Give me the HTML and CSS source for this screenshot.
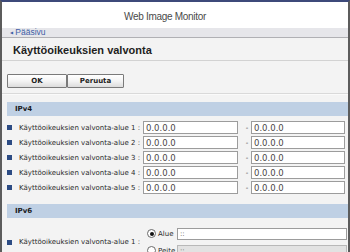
FILE: index.html
```html
<!DOCTYPE html>
<html lang="fi">
<head>
<meta charset="utf-8">
<title>Web Image Monitor</title>
<link rel="stylesheet" href="styles.css">
</head>
<body>
<div class="frame">
  <header class="top"><span class="brand">Web Image Monitor</span></header>
  <nav class="crumb"><a class="crumb-link" href="#"><span class="crumb-arrow">&#9664;</span> Pääsivu</a></nav>
  <main class="main">
    <h1 class="title">Käyttöoikeuksien valvonta</h1>
    <div class="actions">
      <button class="btn btn-ok" type="button">OK</button><button class="btn btn-cancel" type="button">Peruuta</button>
    </div>
    <div class="sep"></div>

    <section class="group">
      <h2 class="band">IPv4</h2>
      <div class="rows">
        <div class="row"><span class="label"><i class="bullet"></i>Käyttöoikeuksien valvonta-alue 1 :</span><input class="field f-from" value="0.0.0.0"><span class="dash">-</span><input class="field f-to" value="0.0.0.0"></div>
        <div class="row"><span class="label"><i class="bullet"></i>Käyttöoikeuksien valvonta-alue 2 :</span><input class="field f-from" value="0.0.0.0"><span class="dash">-</span><input class="field f-to" value="0.0.0.0"></div>
        <div class="row"><span class="label"><i class="bullet"></i>Käyttöoikeuksien valvonta-alue 3 :</span><input class="field f-from" value="0.0.0.0"><span class="dash">-</span><input class="field f-to" value="0.0.0.0"></div>
        <div class="row"><span class="label"><i class="bullet"></i>Käyttöoikeuksien valvonta-alue 4 :</span><input class="field f-from" value="0.0.0.0"><span class="dash">-</span><input class="field f-to" value="0.0.0.0"></div>
        <div class="row"><span class="label"><i class="bullet"></i>Käyttöoikeuksien valvonta-alue 5 :</span><input class="field f-from" value="0.0.0.0"><span class="dash">-</span><input class="field f-to" value="0.0.0.0"></div>
      </div>
    </section>

    <section class="group group-v6">
      <h2 class="band">IPv6</h2>
      <div class="row6">
        <span class="label"><i class="bullet"></i>Käyttöoikeuksien valvonta-alue 1 :</span>
        <div class="opts">
          <div class="opt"><span class="radio radio-on"></span><span class="opt-text">Alue</span><input class="field f-wide" value="::"></div>
          <div class="opt"><span class="radio"></span><span class="opt-text">Peite</span><input class="field f-wide f-off" value="::"></div>
        </div>
      </div>
    </section>
  </main>
</div>
</body>
</html>
```

FILE: styles.css
```css
html, body {
  margin: 0;
  padding: 0;
}
body {
  width: 350px;
  height: 252px;
  overflow: hidden;
  background: #f3f3f3;
  font-family: "DejaVu Sans", Verdana, sans-serif;
}
.frame {
  box-sizing: border-box;
  width: 350px;
  min-height: 300px;
  border-top: 2px solid #3d4a7a;
  border-left: 2px solid #5c5c5c;
  border-right: 2px solid #5c5c5c;
  background: #f3f3f3;
}
.top {
  height: 26px;
  background: #fff;
  display: flex;
  align-items: center;
  padding-left: 122px;
}
.brand {
  font-family: "Liberation Sans", Arial, sans-serif;
  font-size: 10px;
  letter-spacing: -0.3px;
  color: #4a4a4a;
  padding-top: 2px;
}
.crumb {
  height: 9px;
  background: #e6e6ea;
  border-bottom: 1px solid #b0b0b4;
  padding-left: 8px;
  display: flex;
  align-items: center;
}
.crumb-link {
  font-family: "Liberation Sans", Arial, sans-serif;
  font-size: 8.5px;
  color: #3e5ea6;
  text-decoration: none;
  line-height: 9px;
}
.crumb-arrow {
  font-size: 4px;
  vertical-align: 1px;
}
.main {
  padding: 0 0 0 5px;
}
.title {
  margin: 0 0 0 -5px;
  padding: 5px 0 3px 11px;
  font-family: "Liberation Sans", Arial, sans-serif;
  font-weight: bold;
  font-size: 11px;
  line-height: 14px;
  color: #1e1e1e;
  border-bottom: 1px solid #d2d2d2;
}
.actions {
  display: flex;
  margin-top: 13px;
  height: 14px;
}
.btn {
  box-sizing: border-box;
  height: 14px;
  padding: 0;
  margin: 0;
  border: 1px solid #7a7a7a;
  border-radius: 1px;
  background: linear-gradient(#ffffff, #f4f4f4 50%, #dcdcdc);
  font-family: "DejaVu Sans", Verdana, sans-serif;
  font-weight: bold;
  font-size: 7px;
  line-height: 12px;
  color: #222;
}
.btn-ok {
  width: 60px;
}
.btn-cancel {
  width: 57px;
}
.sep {
  margin: 5px 0 0 -5px;
  height: 1px;
  background: #d9d9d9;
  border-bottom: 1px solid #fafafa;
}
.band {
  margin: 7px 0 0;
  height: 14px;
  background: #bfd0e4;
  padding-left: 8px;
  font-size: 7px;
  font-weight: bold;
  line-height: 14px;
  color: #1a1a22;
}
.rows {
  margin-top: 4px;
}
.row {
  display: flex;
  align-items: center;
  height: 15px;
}
.label {
  width: 136px;
  flex-shrink: 0;
  display: flex;
  align-items: center;
  font-size: 7px;
  color: #2a2a2a;
  white-space: nowrap;
}
.bullet {
  width: 5px;
  height: 5px;
  background: #2d4c84;
  margin-right: 7px;
  flex-shrink: 0;
}
.field {
  box-sizing: border-box;
  height: 13px;
  margin: 0;
  padding: 0 2px;
  border: 1px solid #9c9c9c;
  border-radius: 0;
  background: #fff;
  font-family: "DejaVu Sans", Verdana, sans-serif;
  font-size: 8.5px;
  color: #4a4646;
  outline: none;
}
.f-from {
  width: 95px;
}
.f-to {
  width: 94px;
}
.dash {
  width: 13px;
  padding-left: 5px;
  box-sizing: border-box;
  text-align: center;
  font-size: 7px;
  color: #333;
}
.group-v6 .band {
  margin-top: 9px;
}
.row6 {
  display: flex;
  align-items: center;
  margin-top: 7px;
}
.opts {
  margin-left: 4px;
  flex: 1;
  padding-right: 1px;
}
.opt {
  display: flex;
  align-items: center;
  height: 17px;
}
.radio {
  box-sizing: border-box;
  width: 9px;
  height: 9px;
  border-radius: 50%;
  border: 1px solid #6a6a6a;
  background: #fff;
  flex-shrink: 0;
  display: flex;
  align-items: center;
  justify-content: center;
}
.radio-on::after {
  content: "";
  width: 4px;
  height: 4px;
  border-radius: 50%;
  background: #111;
}
.opt-text {
  width: 21px;
  padding-left: 2px;
  box-sizing: border-box;
  font-size: 7px;
  color: #2a2a2a;
}
.f-wide {
  flex: 1;
  min-width: 0;
  height: 12px;
  font-size: 7px;
}
.f-off {
  background: #e2e2e2;
  border-color: #b8b8b8;
}
```
